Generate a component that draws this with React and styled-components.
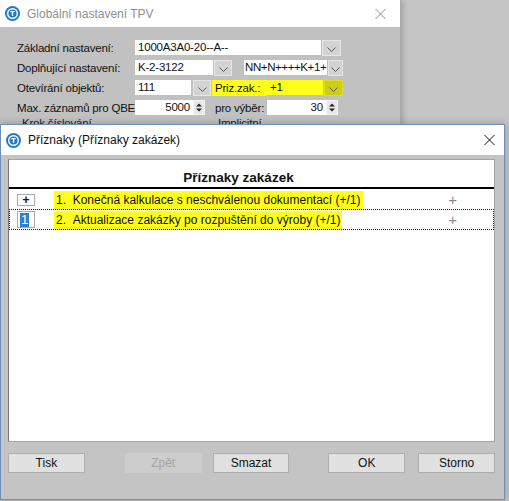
import React from "react";
import styled, { createGlobalStyle } from "styled-components";

const GlobalStyle = createGlobalStyle`
  body {
    margin: 0;
    background: #c5c5c5;
    overflow: hidden;
    font-family: "Liberation Sans", Arial, sans-serif;
  }
`;

const AppIcon = () => (
  <svg width="15" height="15" viewBox="0 0 15 15">
    <circle cx="7.5" cy="7.5" r="7.5" fill="#1f78c9" />
    <circle cx="7.5" cy="7.5" r="4.8" fill="none" stroke="#fff" strokeWidth="1.4" />
    <path d="M5.3 5.6h4.4M7.5 5.6v4.4" stroke="#fff" strokeWidth="1.4" fill="none" />
  </svg>
);

const CloseIcon = ({ color }) => (
  <svg width="11" height="11" viewBox="0 0 11 11">
    <path d="M0.5 0.5L10.5 10.5M10.5 0.5L0.5 10.5" stroke={color} strokeWidth="1" fill="none" />
  </svg>
);

const Chevron = () => (
  <svg width="9" height="5" viewBox="0 0 9 5">
    <path d="M0.5 0.5L4.5 4.5L8.5 0.5" stroke="#555" strokeWidth="1" fill="none" />
  </svg>
);

const Spinner = () => (
  <svg width="8" height="11" viewBox="0 0 8 11">
    <path d="M1 4.5h6L4 1.5z M1 6.5h6L4 9.5z" fill="#222" />
  </svg>
);

const App = () => {
  return (
    <>
      <GlobalStyle />
      <Desktop>
        <BackWindow>
          <TitleBar>
            <AppIcon />
            <Title $inactive>Globální nastavení TPV</Title>
            <CloseBox $right={14}>
              <CloseIcon color="#8a8a8a" />
            </CloseBox>
          </TitleBar>
          <Form>
            <FormRow>
              <Label>Základní nastavení:</Label>
              <Field $w={186}>1000A3A0-20--A--</Field>
              <ComboButton $w={19}>
                <Chevron />
              </ComboButton>
            </FormRow>
            <FormRow>
              <Label>Doplňující nastavení:</Label>
              <Field $w={78}>K-2-3122</Field>
              <ComboButton $w={18}>
                <Chevron />
              </ComboButton>
              <Field $w={83} $ml={12} $tight>NN+N++++K+1+</Field>
              <ComboButton $w={15}>
                <Chevron />
              </ComboButton>
            </FormRow>
            <FormRow>
              <Label>Otevírání objektů:</Label>
              <Field $w={56}>111</Field>
              <ComboButton $w={18} $ml={1}>
                <Chevron />
              </ComboButton>
              <Tag>Priz.zak.:</Tag>
              <Field $w={56} $yellow>+1</Field>
              <ComboButton $w={19} $yellow>
                <Chevron />
              </ComboButton>
            </FormRow>
            <FormRow>
              <Label>Max. záznamů pro QBE:</Label>
              <Field $w={58} $right>5000</Field>
              <SpinButton>
                <Spinner />
              </SpinButton>
              <SmallLabel>pro výběr:</SmallLabel>
              <Field $w={59} $right>30</Field>
              <SpinButton>
                <Spinner />
              </SpinButton>
            </FormRow>
            <GroupRow>
              <GroupLabel $w={196}>Krok číslování</GroupLabel>
              <GroupLabel>Implicitní</GroupLabel>
            </GroupRow>
          </Form>
        </BackWindow>

        <Dialog>
          <TitleBar $h={30}>
            <AppIcon />
            <Title>Příznaky (Příznaky zakázek)</Title>
            <CloseBox $right={9}>
              <CloseIcon color="#111" />
            </CloseBox>
          </TitleBar>
          <DialogBody>
            <Panel>
              <PanelHeading>Příznaky zakázek</PanelHeading>
              <FlagRow $h={19}>
                <ToggleBox $h={12}>+</ToggleBox>
                <Marked>1.&nbsp;&nbsp;Konečná kalkulace s neschválenou dokumentací (+/1)</Marked>
                <AddMark>+</AddMark>
              </FlagRow>
              <FlagRow $h={21} $focused>
                <ToggleBox $h={17} $left>
                  <Selected>1</Selected>
                </ToggleBox>
                <Marked>2.&nbsp;&nbsp;Aktualizace zakázky po rozpuštění do výroby (+/1)</Marked>
                <AddMark>+</AddMark>
              </FlagRow>
            </Panel>
            <ButtonBar>
              <Button>Tisk</Button>
              <Button $ml={40} disabled>
                Zpět
              </Button>
              <Button $ml={11}>Smazat</Button>
              <Button $ml={39}>OK</Button>
              <Button $ml={13}>Storno</Button>
            </ButtonBar>
          </DialogBody>
        </Dialog>
      </Desktop>
    </>
  );
};

export default App;

const Desktop = styled.div`
  position: relative;
  width: 509px;
  height: 501px;
  background: #c5c5c5;
  overflow: hidden;
`;

const BackWindow = styled.div`
  position: absolute;
  left: 0;
  top: 0;
  width: 400px;
  height: 140px;
  background: #c1c1c1;
  border-right: 1px solid #a9a9a9;
  box-shadow: 2px 0 6px rgba(0, 0, 0, 0.18);
`;

const TitleBar = styled.div`
  position: relative;
  height: ${(p) => p.$h || 27}px;
  background: #ffffff;
  display: flex;
  align-items: center;
  padding-left: 5px;
  gap: 7px;
`;

const Title = styled.span`
  font-family: "Liberation Sans", Arial, sans-serif;
  font-size: 12px;
  color: ${(p) => (p.$inactive ? "#8f8f8f" : "#111")};
`;

const CloseBox = styled.div`
  position: absolute;
  right: ${(p) => p.$right}px;
  top: 50%;
  transform: translateY(-50%);
  display: flex;
`;

const Form = styled.div`
  padding: 13px 0 0 17px;
  display: flex;
  flex-direction: column;
  gap: 5px;
  font-size: 11.5px;
  letter-spacing: -0.2px;
`;

const FormRow = styled.div`
  display: flex;
  align-items: center;
  height: 15px;
`;

const Label = styled.span`
  flex-shrink: 0;
  width: 118px;
  color: #111;
  white-space: nowrap;
`;

const Field = styled.div`
  box-sizing: border-box;
  flex-shrink: 0;
  width: ${(p) => p.$w}px;
  height: 15px;
  margin-left: ${(p) => p.$ml || 0}px;
  background: ${(p) => (p.$yellow ? "#ffff1a" : "#ffffff")};
  line-height: 15px;
  padding: 0 ${(p) => (p.$tight ? 1 : 3)}px;
  color: #111;
  text-align: ${(p) => (p.$right ? "right" : "left")};
  white-space: nowrap;
  overflow: hidden;
  letter-spacing: ${(p) => (p.$tight ? "-0.4px" : "inherit")};
`;

const ComboButton = styled.div`
  box-sizing: border-box;
  flex-shrink: 0;
  width: ${(p) => p.$w}px;
  height: 16px;
  margin-left: ${(p) => (p.$ml || 0) + 1}px;
  background: ${(p) => (p.$yellow ? "#cfcf10" : "#d3d3d3")};
  border: 1px solid ${(p) => (p.$yellow ? "#dede30" : "#e6e6e6")};
  display: flex;
  align-items: center;
  justify-content: center;
  padding-top: 3px;
`;

const Tag = styled.div`
  box-sizing: border-box;
  flex-shrink: 0;
  width: 55px;
  height: 16px;
  margin-left: 1px;
  background: #ffff1a;
  line-height: 16px;
  padding-left: 3px;
  color: #111;
  white-space: nowrap;
`;

const SpinButton = styled.div`
  box-sizing: border-box;
  flex-shrink: 0;
  width: 12px;
  height: 15px;
  background: #e8e8e8;
  border: 1px solid #f4f4f4;
  display: flex;
  align-items: center;
  justify-content: center;
`;

const SmallLabel = styled.span`
  flex-shrink: 0;
  width: 52px;
  margin-left: 10px;
  color: #111;
  white-space: nowrap;
`;

const GroupRow = styled.div`
  display: flex;
  padding-left: 5px;
  margin-top: -3px;
`;

const GroupLabel = styled.span`
  width: ${(p) => (p.$w ? `${p.$w}px` : "auto")};
  color: #222;
  white-space: nowrap;
`;

const Dialog = styled.div`
  position: absolute;
  left: 0;
  top: 124px;
  width: 505px;
  height: 376px;
  box-sizing: border-box;
  background: #c4c4c4;
  border: 1px solid #6d8fbd;
  box-shadow: 0 0 8px rgba(0, 0, 0, 0.25);
  display: flex;
  flex-direction: column;
`;

const DialogBody = styled.div`
  flex: 1;
  padding: 4px 9px 0 7px;
  display: flex;
  flex-direction: column;
`;

const Panel = styled.div`
  box-sizing: border-box;
  height: 283px;
  background: #ffffff;
  border: 1px solid #a5a5a5;
  border-left-color: #7a7a7a;
  display: flex;
  flex-direction: column;
`;

const PanelHeading = styled.div`
  height: 27px;
  border-bottom: 2px solid #000;
  text-align: center;
  padding-right: 26px;
  font-size: 13.5px;
  font-weight: bold;
  line-height: 36px;
  color: #111;
  margin-bottom: 1px;
  overflow: hidden;
`;

const FlagRow = styled.div`
  box-sizing: border-box;
  height: ${(p) => p.$h}px;
  display: flex;
  align-items: center;
  border: 1px dotted ${(p) => (p.$focused ? "#222" : "transparent")};
`;

const ToggleBox = styled.div`
  box-sizing: border-box;
  width: 18px;
  height: ${(p) => p.$h}px;
  margin-left: 7px;
  border: 1px solid #aaa;
  display: flex;
  align-items: center;
  justify-content: ${(p) => (p.$left ? "flex-start" : "center")};
  padding-left: ${(p) => (p.$left ? 2 : 0)}px;
  font-size: 12px;
  font-weight: bold;
  color: #111;
`;

const Selected = styled.span`
  background: #2f7fd6;
  color: #fff;
  font-weight: normal;
  font-size: 13px;
  line-height: 14px;
  padding: 0 1px;
`;

const Marked = styled.span`
  margin-left: 19px;
  background: #ffff1a;
  font-size: 12px;
  line-height: 18px;
  padding: 0 2px;
  color: #111;
  white-space: nowrap;
`;

const AddMark = styled.span`
  margin-left: auto;
  margin-right: 36px;
  font-size: 15px;
  color: #8a8a8a;
`;

const ButtonBar = styled.div`
  display: flex;
  margin-top: 11px;
`;

const Button = styled.button`
  box-sizing: border-box;
  width: 77px;
  height: 20px;
  margin-left: ${(p) => p.$ml || 0}px;
  background: ${(p) => (p.disabled ? "#cdcdcd" : "#e1e1e1")};
  border: 1px solid ${(p) => (p.disabled ? "#cdcdcd" : "#adadad")};
  font-family: "Liberation Sans", Arial, sans-serif;
  font-size: 12px;
  color: ${(p) => (p.disabled ? "#a3a3a3" : "#111")};
  padding: 0;
`;
